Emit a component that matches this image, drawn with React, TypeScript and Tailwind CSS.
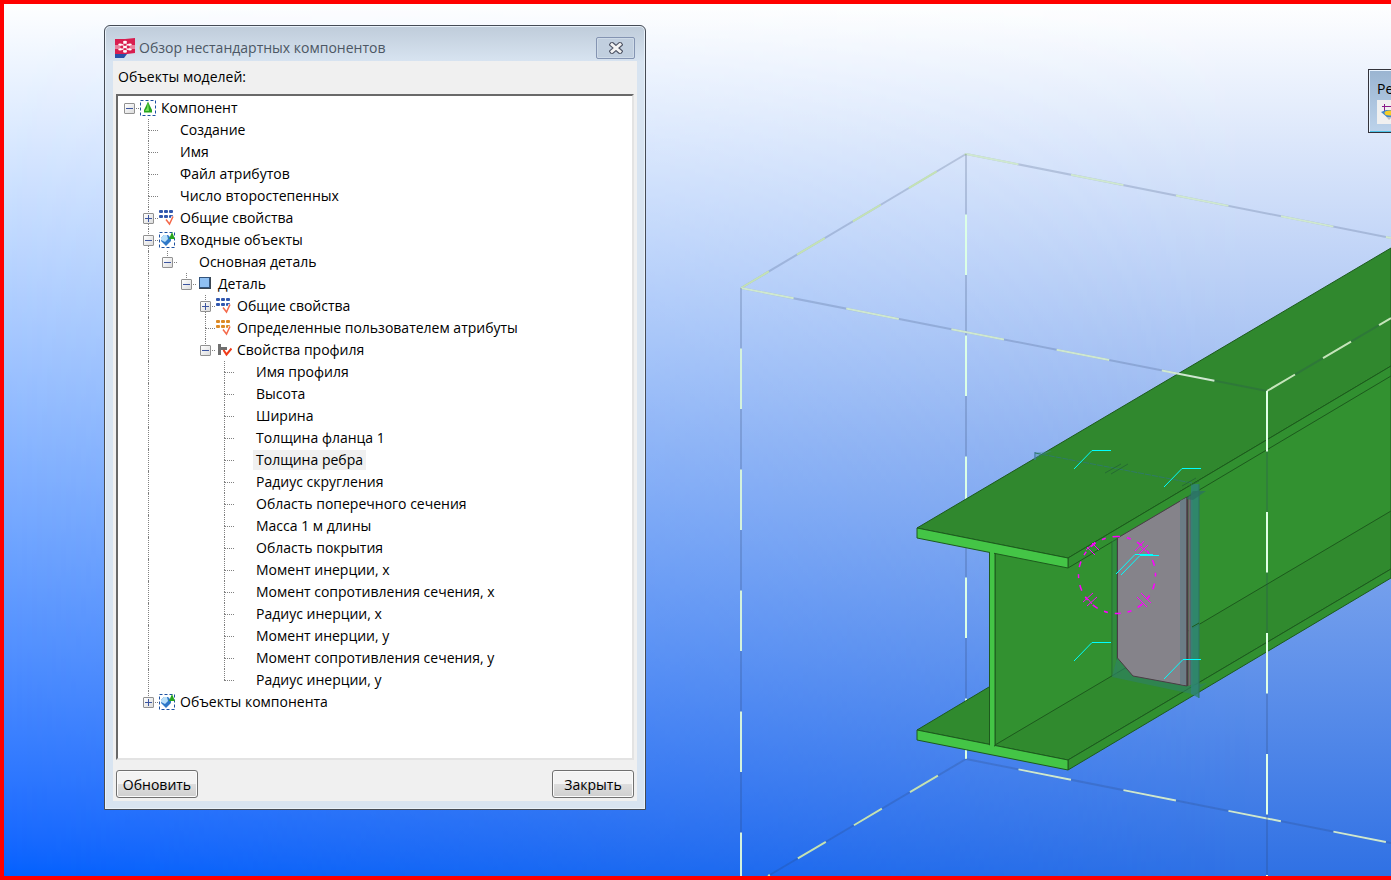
import { useState } from 'react'
import type { ReactNode } from 'react'

type IconName = 'component' | 'common' | 'user' | 'objects' | 'part' | 'profile'

type TreeNode = {
  label: string
  icon?: IconName
  closed?: boolean
  children?: TreeNode[]
}

const profileFields = [
  'Имя профиля',
  'Высота',
  'Ширина',
  'Толщина фланца 1',
  'Толщина ребра',
  'Радиус скругления',
  'Область поперечного сечения',
  'Масса 1 м длины',
  'Область покрытия',
  'Момент инерции, x',
  'Момент сопротивления сечения, x',
  'Радиус инерции, x',
  'Момент инерции, y',
  'Момент сопротивления сечения, y',
  'Радиус инерции, y',
]

const tree: TreeNode = {
  label: 'Компонент',
  icon: 'component',
  children: [
    { label: 'Создание' },
    { label: 'Имя' },
    { label: 'Файл атрибутов' },
    { label: 'Число второстепенных' },
    { label: 'Общие свойства', icon: 'common', closed: true, children: [] },
    {
      label: 'Входные объекты',
      icon: 'objects',
      children: [
        {
          label: 'Основная деталь',
          children: [
            {
              label: 'Деталь',
              icon: 'part',
              children: [
                { label: 'Общие свойства', icon: 'common', closed: true, children: [] },
                { label: 'Определенные пользователем атрибуты', icon: 'user' },
                { label: 'Свойства профиля', icon: 'profile', children: profileFields.map((label) => ({ label })) },
              ],
            },
          ],
        },
      ],
    },
    { label: 'Объекты компонента', icon: 'objects', closed: true, children: [] },
  ],
}

function Dots({ color }: { color: string }) {
  return (
    <>
      {[0, 5, 10].map((x) => (
        <g key={x} fill={color}>
          <rect x={x} y="0" width="4" height="3" rx="1" />
          <rect x={x} y="5" width="4" height="3" rx="1" />
        </g>
      ))}
      <path d="M7 9.500l3.500 4.500L14 6.500" fill="none" stroke="#fff" strokeWidth="3" />
      <path d="M7 9.500l3.500 4.500L14 6.500" fill="none" stroke="#f4694a" strokeWidth="1.500" />
    </>
  )
}

function NodeIcon({ name }: { name: IconName }) {
  const frame = <rect x="0.5" y="0.5" width="15" height="15" fill="none" stroke="#1c50a0" strokeDasharray="3 2" />
  const icons: Record<IconName, ReactNode> = {
    component: (
      <>
        {frame}
        <path d="M8 1.500L10 6l2 4v2.500H4V10l2-4z" fill="#27a51f" />
        <path d="M8 2L7 8l-2 3h4z" fill="#7be05a" />
      </>
    ),
    common: <Dots color="#3157ae" />,
    user: <Dots color="#dc8a26" />,
    objects: (
      <>
        {frame}
        <path d="M2 6l3-3h4l3 3v3l-5 5-5-5z" fill="#2e78c8" />
        <path d="M2 6l3-3h3l1 4-3 3-4-2z" fill="#b9e0fa" />
        <path d="M13 0l3 7h-6z" fill="#28a51f" />
      </>
    ),
    part: (
      <>
        <rect x="2" y="1" width="12" height="12" fill="#3b4652" />
        <rect x="2.5" y="1.5" width="10" height="10" fill="#8fc0f3" stroke="#33547c" />
      </>
    ),
    profile: (
      <>
        <path d="M3.500 2v11M3 6.500h8" fill="none" stroke="#6f6f6f" strokeWidth="3" />
        <path d="M7.500 8l3 4.500 5-6" fill="none" stroke="#f03a18" strokeWidth="2" />
      </>
    ),
  }
  return (
    <svg viewBox="0 0 16 16" className="h-4 w-4" aria-hidden="true">
      {icons[name]}
    </svg>
  )
}

type BranchProps = {
  node: TreeNode
  rails: boolean[]
  last?: boolean
  selected: string
  onSelect: (label: string) => void
}

function Branch({ node, rails, last = true, selected, onSelect }: BranchProps) {
  const [open, setOpen] = useState(!node.closed)
  const root = rails.length === 0
  const childRails = [...rails, !last]

  return (
    <li role="treeitem" aria-expanded={node.children ? open : undefined} aria-selected={selected === node.label}>
      <div className="flex h-[22px] items-center">
        {rails.map((line, i) => (
          <span key={i} className="grid h-full w-[19px] shrink-0 grid-cols-[9px_10px]">
            {line && <span className="col-start-2 border-l border-dotted border-[#808080]" />}
          </span>
        ))}
        <span className="grid h-full w-[19px] shrink-0 grid-cols-[9px_10px] grid-rows-2">
          {!root && <span className="col-start-2 row-start-1 border-l border-dotted border-[#808080]" />}
          <span
            className={
              last
                ? 'col-start-2 row-start-2 border-t border-dotted border-[#808080]'
                : 'col-start-2 row-start-2 border-t border-l border-dotted border-[#808080]'
            }
          />
          {node.children && (
            <button
              type="button"
              aria-label={open ? `Свернуть ${node.label}` : `Развернуть ${node.label}`}
              onClick={() => setOpen(!open)}
              className="z-10 col-span-2 col-start-1 row-span-2 row-start-1 flex h-[11px] w-[11px] items-center justify-center self-center justify-self-center rounded-[1px] border border-[#919191] bg-linear-to-br from-white to-[#dcdcdc]"
            >
              <svg viewBox="0 0 9 9" className="h-[9px] w-[9px]" aria-hidden="true">
                <path d={open ? 'M1 4.5h7' : 'M1 4.5h7M4.5 1v7'} stroke="#3c55a0" />
              </svg>
            </button>
          )}
        </span>
        <span className="flex w-[19px] shrink-0 pl-px">{node.icon && <NodeIcon name={node.icon} />}</span>
        <button
          type="button"
          onClick={() => onSelect(node.label)}
          className={selected === node.label ? 'h-5 bg-[#f0f0f0] px-[3px] leading-5' : 'h-5 px-[3px] leading-5'}
        >
          {node.label}
        </button>
      </div>
      {open && node.children && (
        <ul role="group">
          {node.children.map((child, i) => (
            <Branch
              key={child.label}
              node={child}
              rails={childRails}
              last={i === node.children!.length - 1}
              selected={selected}
              onSelect={onSelect}
            />
          ))}
        </ul>
      )}
    </li>
  )
}

// one edge of the work area box: a faint line with light dashes over it
function Edge({ d, dash, offset = 0, color = '#cfe8cf' }: { d: string; dash: string; offset?: number; color?: string }) {
  return (
    <g fill="none" strokeWidth="2">
      <path d={d} stroke="#2a3a66" strokeOpacity="0.2" />
      <path d={d} stroke={color} strokeDasharray={dash} strokeDashoffset={offset} />
    </g>
  )
}

function Scene() {
  return (
    <svg
      viewBox="0 0 1391 880"
      preserveAspectRatio="xMinYMin slice"
      className="absolute inset-0 h-full w-full"
      role="img"
      aria-label="Балка"
    >
      <Edge d="M741 288L966 154" dash="32.5 32.6" color="#c4e2b4" />
      <Edge d="M966 154L1391 238" dash="53.5 53.5" />
      <Edge d="M966 154V759" dash="60.5 60.5" offset={60.5} color="#dcffe6" />
      <Edge d="M966 759L1391 843" dash="53.5 53.5" offset={53.5} />
      <Edge d="M966 759L768 876" dash="32.5 32.6" offset={32.5} color="#c4e2b4" />

      <g stroke="#1d5a1d" strokeWidth="1" strokeLinejoin="round">
        <path d="M917 730L989 687L1391 450V569L1068 760z" fill="#308a2e" />
        <path d="M995 552L1391 320V511L995 745z" fill="#329130" />
        <path d="M1068 760L1391 569V578L1068 770z" fill="#319030" />
        <path d="M917 528L1391 248V366L1068 558z" fill="#30882e" />
        <path d="M1068 558L1391 366V376L1068 568z" fill="#319030" />
        <path d="M917 730L1068 760V770L917 740z" fill="#44c546" />
        <path d="M989.500 552V745L995 746V553z" fill="#44c546" />
        <path d="M917 528L1068 558V568L917 538z" fill="#44c546" />
      </g>
      <path d="M990 550h4v5h-4zM990 742h4v5h-4z" fill="#44c546" />

      <path d="M1112 541V676M1117 538V660" stroke="#25682f" fill="none" />
      <path d="M1112 541l5-3V676h-5z" fill="#2f8060" fillOpacity="0.25" />
      <path d="M1117 658L1133 676L1187 686L1207 683L1192 694L1112 677z" fill="#2f8068" fillOpacity="0.6" />
      <path d="M1117.500 538L1187 497V686L1133 676L1117.500 658z" fill="#85838a" stroke="#4a3d46" />
      <path d="M1180 501l6-3V685l-6-1z" fill="#6b7d86" />
      <path d="M1187.500 497V686" stroke="#473c42" strokeWidth="2" />
      <path d="M1188.500 497l4-2V684l-4 2z" fill="#75686e" />
      <path d="M1190.500 496V685" stroke="#4f6a6c" />
      <path d="M1191 484h8V698l-8-4z" fill="#2f8575" fillOpacity="0.85" />
      <path d="M1199 484V698" stroke="#2c7360" />
      <path d="M1192 627L1199 623" stroke="#1d5a1d" />
      <path d="M1186 499l7-8h13l-13 9z" fill="#2b6f62" fillOpacity="0.7" />
      <path d="M1034 452h6l12-1-12 5-6 4z" fill="#438ea0" fillOpacity="0.4" />
      <path d="M1035 452V460" stroke="#4778a5" />
      <path d="M1035 453L1192 483" stroke="#2f7a66" strokeDasharray="6 1" />
      <path d="M1105 473l16-9M1111 474l17-10M1182 486l14-8M1189 486l10-5" stroke="#256c32" />

      <Edge d="M741 288L1267 391" dash="53.6 53.6" />
      <Edge d="M1267 391L1391 318" dash="32.5 32.5" color="#c5e6b9" />
      <Edge d="M741 288V876" dash="60.5 60.5" offset={60.5} color="#d4f2dc" />
      <Edge d="M1267 391V876" dash="60.5 60.5" color="#e0ffe6" />

      <g fill="none" stroke="#f0f" strokeWidth="1.500">
        <circle cx="1117" cy="575" r="38.500" strokeDasharray="6 7 4 7" strokeDashoffset="3" transform="rotate(-90 1117 575)" />
        <path d="M1086 550l9-8M1087 547l8 8M1092 543l7 7M1135 551l9-10M1139 554l9-9M1141 547l5 4M1083 602l10-9M1087 606l10-9M1088 599l4 5M1137 597l10 10M1141 593l10 10M1146 599l4-3" strokeWidth="1" />
      </g>
      <g fill="none" stroke="#0ff" strokeWidth="1">
        <path d="M1074 469L1092 450.500H1111" />
        <path d="M1164 487L1182 468.500H1201" />
        <path d="M1074 661L1092 642.500H1111" />
        <path d="M1164 679L1183 659.500H1201" />
        <path d="M1116 574L1135 554.500H1153M1121 575L1140 555.500H1159" />
      </g>
    </svg>
  )
}

function AppLogo() {
  return (
    <svg viewBox="0 0 20 20" className="h-5 w-5" aria-hidden="true">
      <path d="M0 1h10l10-1v15l-8 1H0z" fill="#d81e50" />
      <path d="M0 16h12l-3 4H0z" fill="#2850a8" />
      <path d="M0 8h5l5-3 5 3h5M0 10h5l5 3 5-3h5M6 6l8 6M14 6l-8 6" fill="none" stroke="#fbe3ea" />
      <g fill="#fff">
        <ellipse cx="10" cy="4" rx="2" ry="1.200" />
        <ellipse cx="10" cy="9" rx="2" ry="1.200" />
        <ellipse cx="10" cy="13.500" rx="2" ry="1.200" />
        <ellipse cx="5" cy="6.500" rx="1.800" ry="1" />
        <ellipse cx="15" cy="6.500" rx="1.800" ry="1" />
        <ellipse cx="5" cy="11.500" rx="1.800" ry="1" />
        <ellipse cx="15" cy="11.500" rx="1.800" ry="1" />
      </g>
    </svg>
  )
}

const buttonClass =
  'h-7 w-[82px] rounded-[3px] border border-[#707070] bg-linear-to-b from-[#f3f3f3] from-50% via-[#dedede] via-50% to-[#cfcfcf] text-center leading-7 shadow-[inset_0_0_0_1px_#fbfbfb]'

export default function App() {
  const [selected, setSelected] = useState('Толщина ребра')

  return (
    <main className="relative min-h-screen overflow-hidden bg-linear-to-b from-white to-[#0060ff] font-['Open_Sans','Noto_Sans',sans-serif] text-sm text-black">
      <div className="absolute inset-0 bg-linear-to-b from-white via-[#94b4ef] to-[#2e70e4] [mask-image:linear-gradient(to_right,transparent,black_90%)]" />
      <Scene />

      <section
        role="dialog"
        aria-labelledby="dialog-title"
        className="absolute top-[25px] left-[104px] w-[542px] rounded-t-md border border-[#454b55] bg-[#d8e4f1] bg-linear-to-b from-[#bfccda] to-[#d8e4f1] to-[36px] px-2 pb-2 shadow-[inset_0_0_0_1px_#e8f1fa]"
      >
        <header className="flex h-[35px] items-center pt-2">
          <span className="pl-[2px]">
            <AppLogo />
          </span>
          <h1 id="dialog-title" className="flex-1 pl-1 text-[#4c5764]">
            Обзор нестандартных компонентов
          </h1>
          <button
            type="button"
            aria-label="Закрыть окно"
            className="mr-[2px] flex h-[22px] w-[39px] items-center justify-center rounded-[2px] border border-[#8494b2] bg-[#c1cfdf] shadow-[inset_0_0_0_1px_#cfdbe8]"
          >
            <svg viewBox="0 0 14 12" className="h-3 w-3.5" aria-hidden="true">
              <path d="M3 2.500l8 7M11 2.500l-8 7" stroke="#4f5566" strokeWidth="5" strokeLinecap="square" />
              <path d="M3 2.500l8 7M11 2.500l-8 7" stroke="#f4f4f4" strokeWidth="2.800" strokeLinecap="square" />
            </svg>
          </button>
        </header>

        <div className="bg-[#f0f0f0] p-[3px] pt-0">
          <h2 className="flex h-[33px] items-center pb-0.5 pl-[2px]">Объекты моделей:</h2>
          <ul
            role="tree"
            className="h-[666px] overflow-hidden border-2 border-t-[#696969] border-r-[#e3e3e3] border-b-[#e3e3e3] border-l-[#696969] bg-white pt-px pl-[2px]"
          >
            <Branch node={tree} rails={[]} selected={selected} onSelect={setSelected} />
          </ul>
          <footer className="flex justify-between pt-[10px]">
            <button type="button" className={buttonClass}>
              Обновить
            </button>
            <button type="button" className={buttonClass}>
              Закрыть
            </button>
          </footer>
        </div>
      </section>

      <aside className="absolute top-[69px] right-0 h-16 w-[23px] overflow-hidden border border-r-0 border-[#33333b] bg-linear-to-b from-[#9ab4d1] to-[#bdd3eb] pt-2 pl-2 shadow-[inset_1px_1px_0_#e8f3ff,inset_0_-1px_0_#4fc3e8]">
        <p className="leading-[22px] whitespace-nowrap">Ре</p>
        <button type="button" aria-label="Рабочая плоскость" className="flex h-6 w-6 items-center bg-[#f0f0f0] pl-1">
          <svg viewBox="0 0 16 16" className="h-4 w-4 shrink-0" aria-hidden="true">
            <path d="M1 2.500h15M3.500 0v7" stroke="#8a1a8a" fill="none" />
            <path d="M3 10l5 6 5-5z" fill="#b8bcc4" />
            <path d="M0 8l5-2h8l3 2-5 5H6z" fill="#3c86cf" />
            <ellipse cx="8.500" cy="9" rx="5" ry="2.500" fill="#f5cd28" />
          </svg>
        </button>
      </aside>

      <div className="pointer-events-none absolute inset-0 border-y-4 border-l-4 border-[#f00]" />
    </main>
  )
}
